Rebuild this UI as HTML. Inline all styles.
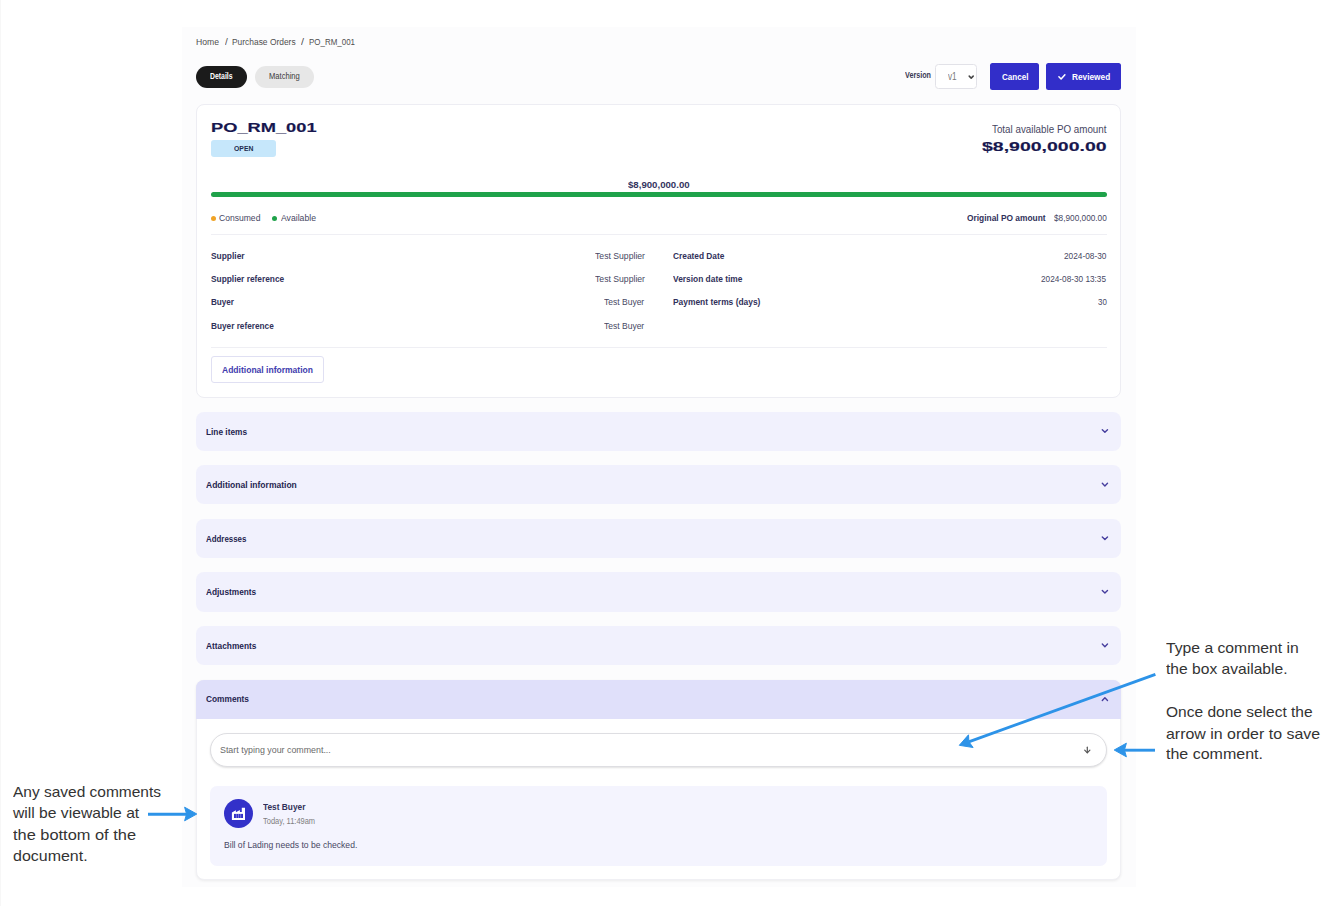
<!DOCTYPE html>
<html lang="en">
<head>
<meta charset="utf-8">
<title>PO_RM_001 - Purchase Order</title>
<style>
html,body{margin:0;padding:0}
body{width:1334px;height:906px;position:relative;overflow:hidden;background:#ffffff;
  font-family:"Liberation Sans",sans-serif;}
.abs,.panel,.pill,.btn,.card,.badge,.bar,.dot,.hr,.acc,.input,.cbox,.avatar,.sel,svg.ov{position:absolute;box-sizing:border-box}
.edge{position:absolute;left:0;top:0;width:1px;height:906px;background:#f7f7f7}
.panel{left:182px;top:27px;width:954px;height:860px;background:#fcfcfd}
.pill{top:66px;height:21.6px;border-radius:11px}
.pill.on{left:196px;width:51.2px;background:#1b1b1b}
.pill.off{left:255px;width:58.6px;background:#e7e7e7}
.sel{left:935.4px;top:64.4px;width:41.2px;height:24.3px;background:#fff;border:1px solid #e2e2e8;border-radius:3.5px}
.btn{top:63.1px;height:26.5px;background:#322ec9;border-radius:2.5px}
.btn.cancel{left:990px;width:49px}
.btn.review{left:1046px;width:75px}
.card{left:196px;top:104px;width:925px;height:293.5px;background:#fff;border:1px solid #ededf3;border-radius:8px}
.badge{left:210.8px;top:139.6px;width:65px;height:17.9px;background:#c6e7fb;border-radius:3px}
.bar{left:210.6px;top:192.4px;width:896px;height:5px;background:#1fa24a;border-radius:3px}
.dot{width:5px;height:5px;border-radius:50%;top:215.5px}
.dot.o{left:210.5px;background:#f0a326}
.dot.g{left:271.9px;background:#1fa24a}
.hr{left:210.6px;width:896px;height:1px;background:#efeff4}
.ghost{left:210.6px;top:356.4px;width:113px;height:26.6px;background:#fff;border:1px solid #e0e0f3;border-radius:3px}
.acc{left:196.2px;width:924.7px;height:39.2px;background:#f1f1fd;border-radius:8px}
.comments{left:196.2px;top:679.6px;width:925px;height:200.6px;background:#fff;border:1px solid #f0f0f4;border-radius:8px;box-shadow:0 1px 3px rgba(0,0,0,.07)}
.comments .head{left:-1px;top:-1px;width:925px;height:39.6px;background:#e0e0fa;border-radius:8px 8px 0 0}
.input{left:210px;top:732.6px;width:897px;height:34.2px;border-radius:17.1px;background:#fff;border:1px solid #dedee2;box-shadow:0 1px 2px rgba(0,0,0,.12)}
.cbox{left:210.2px;top:785.6px;width:897px;height:80.3px;background:#f4f4fe;border-radius:7px}
.avatar{left:224.2px;top:799.4px;width:29px;height:29px;border-radius:50%;background:#3331c9}
svg.ov{left:0;top:0;width:1334px;height:906px;overflow:visible}
.texts .t{position:absolute;white-space:nowrap;line-height:0;transform-origin:0 0;display:block}

</style>
</head>
<body>
<div class="edge"></div>
<main class="panel" aria-label="Purchase order"></main>
<nav class="abs" aria-label="Tabs">
  <div class="pill on"></div>
  <div class="pill off"></div>
</nav>
<div class="sel"></div>
<div class="btn cancel"></div>
<div class="btn review"></div>
<section class="card"></section>
<div class="badge"></div>
<div class="bar"></div>
<div class="dot o"></div>
<div class="dot g"></div>
<div class="hr" style="top:234px"></div>
<div class="hr" style="top:346.6px"></div>
<div class="abs ghost"></div>
<div class="acc" style="top:411.6px"></div>
<div class="acc" style="top:465.2px"></div>
<div class="acc" style="top:518.8px"></div>
<div class="acc" style="top:572.4px"></div>
<div class="acc" style="top:626px"></div>
<section class="abs comments"><div class="abs head"></div></section>
<div class="input"></div>
<article class="cbox"></article>
<div class="avatar"></div>
<svg class="ov" viewBox="0 0 1334 906" aria-hidden="true">
  <!-- accordion chevrons -->
  <g fill="none" stroke="#463e9e" stroke-width="1.4" stroke-linecap="round" stroke-linejoin="round">
    <path d="M1102.3 429.7l2.6 2.6 2.6-2.6"/>
    <path d="M1102.3 483.3l2.6 2.6 2.6-2.6"/>
    <path d="M1102.3 536.9l2.6 2.6 2.6-2.6"/>
    <path d="M1102.3 590.5l2.6 2.6 2.6-2.6"/>
    <path d="M1102.3 644.1l2.6 2.6 2.6-2.6"/>
    <path d="M1102.3 700.4l2.6-2.6 2.6 2.6"/>
  </g>
  <!-- select caret -->
  <path d="M969.2 76.1l2 2 2-2" fill="none" stroke="#444" stroke-width="1.5" stroke-linecap="round" stroke-linejoin="round"/>
  <!-- check mark -->
  <path d="M1058.9 76.8l2.2 2.2 3.8-4.3" fill="none" stroke="#fff" stroke-width="1.5" stroke-linecap="round" stroke-linejoin="round"/>
  <!-- send arrow -->
  <g fill="none" stroke="#555" stroke-width="1.2" stroke-linecap="round" stroke-linejoin="round">
    <path d="M1087.3 747.2v5.4"/><path d="M1084.7 750.2l2.6 2.6 2.6-2.6"/>
  </g>
  <!-- factory icon -->
  <path fill="#fff" d="M231.9 820.1V812.4l4-2.2v2l4-2.3v2.1h1.9v-4.3h3.2v12.4z"/>
  <rect x="234" y="813.9" width="9" height="4.1" fill="#3331c9"/>
  <g fill="#fff" opacity=".55"><rect x="235.9" y="813.9" width="0.6" height="4.1"/><rect x="238.2" y="813.9" width="0.6" height="4.1"/><rect x="240.5" y="813.9" width="0.6" height="4.1"/></g>
  <!-- annotation arrows -->
  <g stroke="#2d93e8" stroke-width="2.9" fill="#2d93e8">
    <line x1="1155" y1="750.2" x2="1123" y2="750.2"/>
    <line x1="148" y1="814.2" x2="188" y2="814.2"/>
    <line x1="1155.4" y1="674.4" x2="968.7" y2="741.9"/>
  </g>
  <g fill="#2d93e8" stroke="#2d93e8" stroke-width="1" stroke-linejoin="round">
    <path d="M1114.2 750.0L1126.4 743.2L1124.4 750.0L1126.4 756.8z"/>
    <path d="M196.8 814.0L184.6 820.8L186.6 814.0L184.6 807.2z"/>
    <path d="M959.3 745.3L968.5 734.8L968.9 741.8L973.1 747.5z"/>
  </g>
</svg>

<div class="texts">
<span class="t" style="left:196.20px;top:42px;font-size:9.6px;font-weight:400;color:#4f4f4f;transform:scaleX(0.8987);">Home</span>
<span class="t" style="left:224.60px;top:42px;font-size:9.6px;font-weight:400;color:#4f4f4f;transform:scaleX(1.0480);">/</span>
<span class="t" style="left:232.40px;top:42px;font-size:9.6px;font-weight:400;color:#4f4f4f;transform:scaleX(0.8771);">Purchase Orders</span>
<span class="t" style="left:301.20px;top:42px;font-size:9.6px;font-weight:400;color:#4f4f4f;transform:scaleX(1.1228);">/</span>
<span class="t" style="left:309.00px;top:42px;font-size:9.6px;font-weight:400;color:#4f4f4f;transform:scaleX(0.8293);">PO_RM_001</span>
<span class="t" style="left:210.40px;top:76px;font-size:8.8px;font-weight:700;color:#ffffff;transform:scaleX(0.7831);">Details</span>
<span class="t" style="left:269.00px;top:76px;font-size:8.8px;font-weight:400;color:#3c3c3c;transform:scaleX(0.8627);">Matching</span>
<span class="t" style="left:905.00px;top:75px;font-size:8.4px;font-weight:700;color:#3a3a55;transform:scaleX(0.8591);">Version</span>
<span class="t" style="left:948.00px;top:77px;font-size:10.0px;font-weight:400;color:#7a7a7a;transform:scaleX(0.8237);">v1</span>
<span class="t" style="left:1001.70px;top:77px;font-size:9.4px;font-weight:700;color:#ffffff;transform:scaleX(0.8585);">Cancel</span>
<span class="t" style="left:1071.80px;top:77px;font-size:9.4px;font-weight:700;color:#ffffff;transform:scaleX(0.8832);">Reviewed</span>
<span class="t" style="left:211.00px;top:128px;font-size:12.4px;font-weight:700;color:#17174f;transform:scaleX(1.4740);-webkit-text-stroke:0.15px #17174f;">PO_RM_001</span>
<span class="t" style="left:233.90px;top:149px;font-size:7.6px;font-weight:700;color:#1f2d4f;transform:scaleX(0.9010);">OPEN</span>
<span class="t" style="left:992.00px;top:130px;font-size:10.1px;font-weight:400;color:#474763;transform:scaleX(0.9718);">Total available PO amount</span>
<span class="t" style="left:981.90px;top:147px;font-size:12.3px;font-weight:700;color:#17174f;transform:scaleX(1.5844);-webkit-text-stroke:0.15px #17174f;">$8,900,000.00</span>
<span class="t" style="left:628.00px;top:185px;font-size:9.8px;font-weight:700;color:#34345e;transform:scaleX(0.9831);">$8,900,000.00</span>
<span class="t" style="left:219.00px;top:218px;font-size:9.3px;font-weight:400;color:#474763;transform:scaleX(0.9206);">Consumed</span>
<span class="t" style="left:280.60px;top:218px;font-size:9.3px;font-weight:400;color:#474763;transform:scaleX(0.9318);">Available</span>
<span class="t" style="left:967.40px;top:218px;font-size:9.3px;font-weight:700;color:#31315a;transform:scaleX(0.9004);">Original PO amount</span>
<span class="t" style="left:1053.60px;top:218px;font-size:9.3px;font-weight:400;color:#474763;transform:scaleX(0.8879);">$8,900,000.00</span>
<span class="t" style="left:211.00px;top:256px;font-size:9.3px;font-weight:700;color:#31315a;transform:scaleX(0.9031);">Supplier</span>
<span class="t" style="left:211.00px;top:279px;font-size:9.3px;font-weight:700;color:#31315a;transform:scaleX(0.8966);">Supplier reference</span>
<span class="t" style="left:211.00px;top:302px;font-size:9.3px;font-weight:700;color:#31315a;transform:scaleX(0.8726);">Buyer</span>
<span class="t" style="left:211.00px;top:326px;font-size:9.3px;font-weight:700;color:#31315a;transform:scaleX(0.8868);">Buyer reference</span>
<span class="t" style="left:594.60px;top:256px;font-size:9.3px;font-weight:400;color:#474763;transform:scaleX(0.9302);">Test Supplier</span>
<span class="t" style="left:594.60px;top:279px;font-size:9.3px;font-weight:400;color:#474763;transform:scaleX(0.9302);">Test Supplier</span>
<span class="t" style="left:604.40px;top:302px;font-size:9.3px;font-weight:400;color:#474763;transform:scaleX(0.9153);">Test Buyer</span>
<span class="t" style="left:604.40px;top:326px;font-size:9.3px;font-weight:400;color:#474763;transform:scaleX(0.9153);">Test Buyer</span>
<span class="t" style="left:672.60px;top:256px;font-size:9.3px;font-weight:700;color:#31315a;transform:scaleX(0.8961);">Created Date</span>
<span class="t" style="left:672.60px;top:279px;font-size:9.3px;font-weight:700;color:#31315a;transform:scaleX(0.9013);">Version date time</span>
<span class="t" style="left:672.60px;top:302px;font-size:9.3px;font-weight:700;color:#31315a;transform:scaleX(0.9045);">Payment terms (days)</span>
<span class="t" style="left:1064.00px;top:256px;font-size:9.3px;font-weight:400;color:#474763;transform:scaleX(0.8915);">2024-08-30</span>
<span class="t" style="left:1041.40px;top:279px;font-size:9.3px;font-weight:400;color:#474763;transform:scaleX(0.8855);">2024-08-30 13:35</span>
<span class="t" style="left:1097.60px;top:302px;font-size:9.3px;font-weight:400;color:#474763;transform:scaleX(0.8508);">30</span>
<span class="t" style="left:222.00px;top:370px;font-size:9.8px;font-weight:700;color:#3f3cae;transform:scaleX(0.8708);">Additional information</span>
<span class="t" style="left:205.60px;top:432px;font-size:9.0px;font-weight:700;color:#25254f;transform:scaleX(0.9210);">Line items</span>
<span class="t" style="left:205.60px;top:485px;font-size:9.0px;font-weight:700;color:#25254f;transform:scaleX(0.9458);">Additional information</span>
<span class="t" style="left:205.60px;top:539px;font-size:9.0px;font-weight:700;color:#25254f;transform:scaleX(0.8777);">Addresses</span>
<span class="t" style="left:205.60px;top:592px;font-size:9.0px;font-weight:700;color:#25254f;transform:scaleX(0.9208);">Adjustments</span>
<span class="t" style="left:205.60px;top:646px;font-size:9.0px;font-weight:700;color:#25254f;transform:scaleX(0.9245);">Attachments</span>
<span class="t" style="left:205.60px;top:699px;font-size:9.0px;font-weight:700;color:#25254f;transform:scaleX(0.9244);">Comments</span>
<span class="t" style="left:220.20px;top:750px;font-size:9.3px;font-weight:400;color:#6a6a6a;transform:scaleX(0.9530);">Start typing your comment...</span>
<span class="t" style="left:263.00px;top:807px;font-size:9.3px;font-weight:700;color:#31315a;transform:scaleX(0.8950);">Test Buyer</span>
<span class="t" style="left:263.00px;top:821px;font-size:8.6px;font-weight:400;color:#808080;transform:scaleX(0.8701);">Today, 11:49am</span>
<span class="t" style="left:224.40px;top:845px;font-size:9.8px;font-weight:400;color:#474763;transform:scaleX(0.8772);">Bill of Lading needs to be checked.</span>
<span class="t" style="left:1165.80px;top:648px;font-size:14.1px;font-weight:400;color:#333333;transform:scaleX(1.1144);">Type a comment in</span>
<span class="t" style="left:1165.80px;top:669px;font-size:14.1px;font-weight:400;color:#333333;transform:scaleX(1.1075);">the box available.</span>
<span class="t" style="left:1165.80px;top:712px;font-size:14.1px;font-weight:400;color:#333333;transform:scaleX(1.1006);">Once done select the</span>
<span class="t" style="left:1165.80px;top:734px;font-size:14.1px;font-weight:400;color:#333333;transform:scaleX(1.1305);">arrow in order to save</span>
<span class="t" style="left:1165.80px;top:754px;font-size:14.1px;font-weight:400;color:#333333;transform:scaleX(1.1360);">the comment.</span>
<span class="t" style="left:13.40px;top:792px;font-size:14.1px;font-weight:400;color:#333333;transform:scaleX(1.0985);">Any saved comments</span>
<span class="t" style="left:13.40px;top:813px;font-size:14.1px;font-weight:400;color:#333333;transform:scaleX(1.1110);">will be viewable at</span>
<span class="t" style="left:13.40px;top:835px;font-size:14.1px;font-weight:400;color:#333333;transform:scaleX(1.1628);">the bottom of the</span>
<span class="t" style="left:13.40px;top:856px;font-size:14.1px;font-weight:400;color:#333333;transform:scaleX(1.1335);">document.</span>
</div>
</body>
</html>
